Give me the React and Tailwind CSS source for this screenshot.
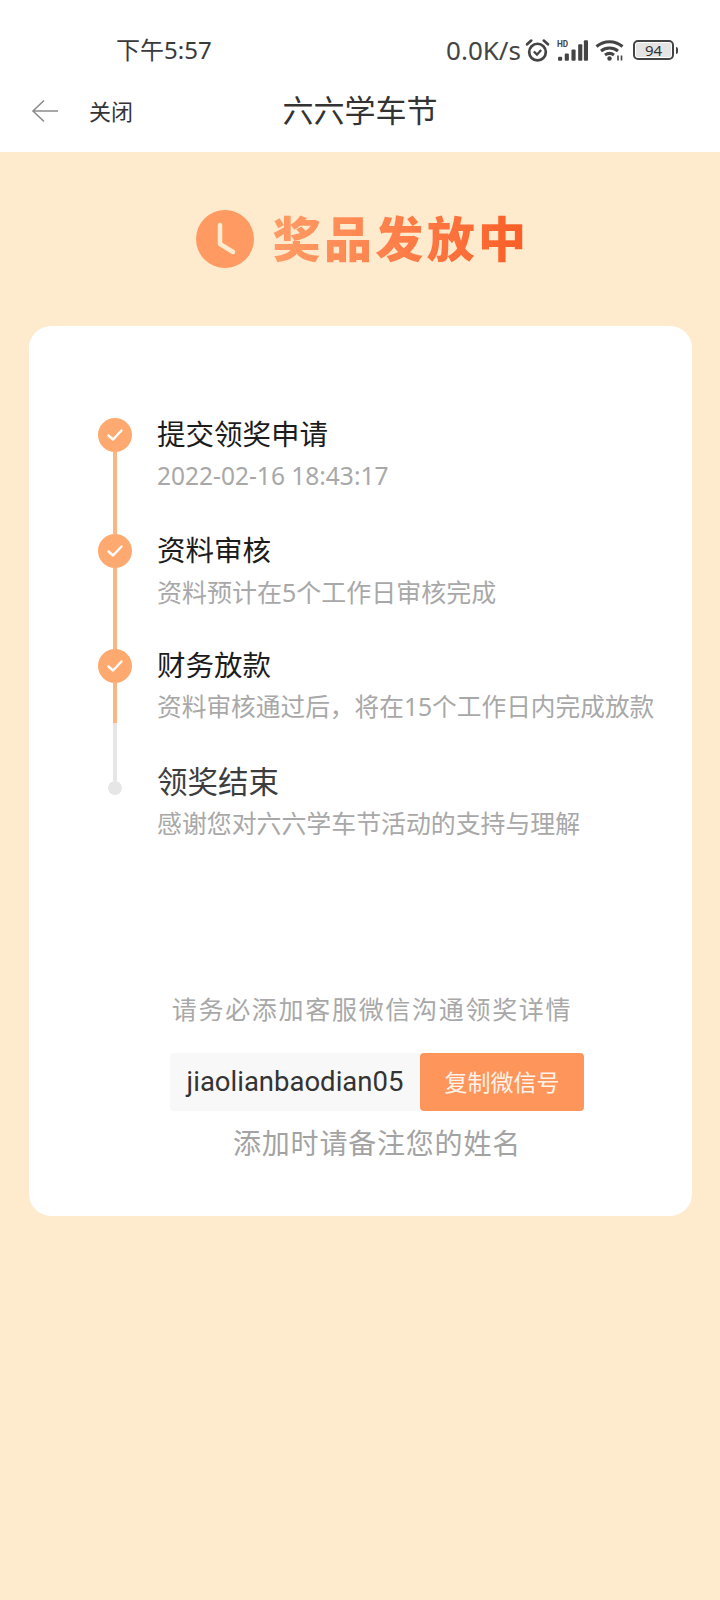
const FONT = { fontFamily: '"Noto Sans", "Noto Sans CJK SC", sans-serif' };

const steps = [
  { title: '提交领奖申请', desc: '2022-02-16 18:43:17', size: 'text-[24.5px]', done: true, line: 'full' },
  { title: '资料审核', desc: '资料预计在5个工作日审核完成', size: 'text-[25px]', done: true, line: 'full' },
  { title: '财务放款', desc: '资料审核通过后，将在15个工作日内完成放款', size: 'text-[24.7px]', done: true, line: 'half' },
  { title: '领奖结束', desc: '感谢您对六六学车节活动的支持与理解', size: 'text-[24.9px]', done: false, line: 'none' },
];

const StatusIcons = () => (
  <div className="flex items-center">
    {/* alarm */}
    <svg width="25" height="25" viewBox="0 0 24 24" fill="none" stroke="#444" strokeWidth="2.6">
      <circle cx="12" cy="13.5" r="8" />
      <path d="M8.5 13l3 3 4-4.5" strokeWidth="2.2" />
      <path d="M2 6l4-3.5M22 6l-4-3.5" strokeLinecap="round" />
    </svg>
    {/* signal */}
    <svg width="31" height="23" viewBox="0 0 30 22" fill="#444" className="ml-[7px]">
      <text x="0" y="8" fontSize="8" fontWeight="700" fontFamily="Roboto, sans-serif">HD</text>
      <rect x="1" y="17" width="4" height="4" rx="1" />
      <rect x="7.5" y="14" width="4" height="7" rx="1" />
      <rect x="14" y="10" width="4" height="11" rx="1" />
      <rect x="20.5" y="5" width="4" height="16" rx="1" />
      <rect x="26" y="1" width="4" height="20" rx="1" />
    </svg>
    {/* wifi */}
    <svg width="30" height="22" viewBox="0 0 30 22" fill="none" stroke="#444" strokeWidth="3" className="ml-[7px]">
      <path d="M1.5 7.5C9 1 20 1 27.5 7.5" />
      <path d="M6 12c5-4 12-4 17 0" />
      <path d="M10 16c3-2.2 6-2.2 9 0" />
      <circle cx="14.5" cy="19.5" r="2.2" fill="#444" stroke="none" />
      <path d="M23 16.5v5M26.5 16.5v5" strokeWidth="1.6" />
    </svg>
    {/* battery */}
    <div className="ml-[8px] flex items-center gap-[2px]">
      <div className="w-[41px] h-[20px] rounded-[5px] border-2 border-[#444] p-[1px] flex">
        <div className="w-[38px] bg-[#e4e4e4] rounded-[2px] flex items-center justify-center text-[15px] leading-none text-[#333]">94</div>
      </div>
      <div className="w-[2px] h-[7px] bg-[#444] rounded-r-sm" />
    </div>
  </div>
);

const Step = ({ step }) => (
  <div className="flex h-[115.5px]">
    <div className="w-[34px] flex flex-col items-center">
      {step.done ? (
        <div className="w-[34px] h-[34px] shrink-0 rounded-full bg-[#fea96f] flex items-center justify-center">
          <svg width="18" height="14" viewBox="0 0 18 14" fill="none" stroke="#fff" strokeWidth="2.4" strokeLinecap="round" strokeLinejoin="round">
            <path d="M2.5 7.5l4.5 4 8.5-9" />
          </svg>
        </div>
      ) : (
        <>
          <div className="w-[4px] h-[16px] bg-[#e6e6e6]" />
          <div className="w-[14px] h-[14px] rounded-full bg-[#e6e6e6]" />
        </>
      )}
      {step.line === 'full' && <div className="w-[4px] flex-1 bg-[#f9b582]" />}
      {step.line === 'half' && (
        <>
          <div className="w-[4px] h-[40px] bg-[#f9b582]" />
          <div className="w-[4px] flex-1 bg-[#e6e6e6]" />
        </>
      )}
    </div>
    <div className="ml-[25px] -mt-[2px]">
      <div className={step.done ? 'text-[28.5px] leading-[36px] text-[#1c1c1c]' : 'text-[30.5px] leading-[36px] text-[#3d3d3d]'}>{step.title}</div>
      <div className={`mt-[6px] ${step.size} leading-[36px] text-[#a8a8a8] whitespace-nowrap`}>{step.desc}</div>
    </div>
  </div>
);

export default function App() {
  return (
    <div className="min-h-[1600px] bg-[#feeacd]" style={FONT}>
      <div className="bg-white h-[152px]">
        <div className="h-[75px] pt-[31px] pl-[116px] pr-[42px] flex items-start justify-between">
          <span className="text-[24px] leading-[38px] text-[#3a3a3a]">下午5:57</span>
          <div className="flex items-center h-[38px] gap-[4px]">
            <span className="text-[26px] leading-[38px] text-[#444]">0.0K/s</span>
            <StatusIcons />
          </div>
        </div>
        <div className="relative h-[72px] flex items-center pl-[31px]">
          <svg width="27" height="24" viewBox="0 0 27 24" fill="none" stroke="#8c8c8c" strokeWidth="1.6">
            <path d="M13 1.5L2 12l11 10.5M2 12h25" />
          </svg>
          <span className="ml-[31px] text-[22px] text-[#333]">关闭</span>
          <div className="absolute inset-x-0 -top-[1px] h-[72px] flex items-center justify-center text-[31px] text-[#333]">六六学车节</div>
        </div>
      </div>

      <div className="pt-[58px] flex items-center justify-center gap-[18px] pl-[6px]">
        <div className="w-[58px] h-[58px] rounded-full bg-[#ff9a62] flex items-center justify-center">
          <svg width="58" height="58" viewBox="0 0 58 58" fill="none" stroke="#feeacd" strokeWidth="4.5" strokeLinecap="round" strokeLinejoin="round">
            <path d="M24 15v19l13 8" />
          </svg>
        </div>
        <span className="text-[48px] leading-[58px] font-black tracking-[3.4px] bg-linear-to-r from-[#ff9c66] to-[#fa5c24] bg-clip-text text-transparent">奖品发放中</span>
      </div>

      <div className="ml-[29px] mr-[28px] mt-[58px] h-[890px] bg-white rounded-[22px] pt-[92px]">
        <div className="pl-[69px]">
          {steps.map((step) => (
            <Step key={step.title} step={step} />
          ))}
        </div>
        <div className="mt-[111px] pl-[33px] flex flex-col items-center">
          <div className="-ml-[10px] text-[25px] leading-[36px] tracking-[1.7px] text-[#a8a8a8]">请务必添加客服微信沟通领奖详情</div>
          <div className="mt-[26px] flex h-[58px]">
            <div className="w-[250px] bg-[#f8f8f8] rounded-l-[4px] flex items-center justify-center text-[27.5px] text-[#333]" style={{ fontFamily: 'Roboto, sans-serif' }}>jiaolianbaodian05</div>
            <button className="w-[164px] bg-[#fe965c] rounded-[4px] text-[23px] text-[#fff3ea]">复制微信号</button>
          </div>
          <div className="mt-[12px] text-[28px] leading-[40px] tracking-[0.8px] text-[#a3a3a3]">添加时请备注您的姓名</div>
        </div>
      </div>
    </div>
  );
}
